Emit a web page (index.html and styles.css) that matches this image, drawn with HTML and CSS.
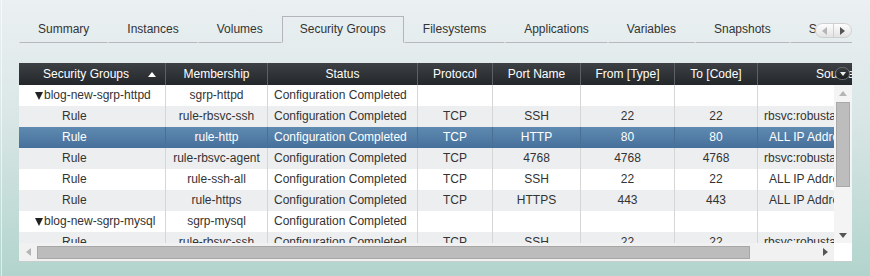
FILE: index.html
```html
<!DOCTYPE html>
<html lang="en">

<head>
    <meta charset="UTF-8" />
    <title>Security Groups</title>
    <link rel="stylesheet" href="styles.css">
</head>

<body>
    <div class="page">
        <div class="tabbar">
            <ul class="tabs">
                <li>Summary</li>
                <li>Instances</li>
                <li>Volumes</li>
                <li class="active">Security Groups</li>
                <li>Filesystems</li>
                <li>Applications</li>
                <li>Variables</li>
                <li>Snapshots</li>
                <li>Scripts</li>
            </ul>
            <div class="tab-scroll">
                <span class="ts-btn"><i class="arrow-left off"></i></span>
                <span class="ts-btn"><i class="arrow-right"></i></span>
            </div>
        </div>

        <div class="grid">
            <div class="grid-head">
                <div class="row head">
                    <div class="c c1 sortable">Security Groups <i class="sort-up"></i></div>
                    <div class="c c2">Membership</div>
                    <div class="c c3">Status</div>
                    <div class="c c4">Protocol</div>
                    <div class="c c5">Port Name</div>
                    <div class="c c6">From [Type]</div>
                    <div class="c c7">To [Code]</div>
                    <div class="c c8">Source</div>
                </div>
                <span class="col-menu"><i></i></span>
            </div>

            <div class="grid-main">
                <div class="grid-body">
                    <div class="row">
                        <div class="c c1 group"><i class="expander"></i>blog-new-sgrp-httpd</div>
                        <div class="c c2">sgrp-httpd</div>
                        <div class="c c3 left">Configuration Completed</div>
                        <div class="c c4"></div>
                        <div class="c c5"></div>
                        <div class="c c6"></div>
                        <div class="c c7"></div>
                        <div class="c c8 src"></div>
                    </div>
                    <div class="row alt">
                        <div class="c c1 rule">Rule</div>
                        <div class="c c2">rule-rbsvc-ssh</div>
                        <div class="c c3 left">Configuration Completed</div>
                        <div class="c c4">TCP</div>
                        <div class="c c5">SSH</div>
                        <div class="c c6">22</div>
                        <div class="c c7">22</div>
                        <div class="c c8 src">rbsvc:robustagent-ssh</div>
                    </div>
                    <div class="row selected">
                        <div class="c c1 rule">Rule</div>
                        <div class="c c2">rule-http</div>
                        <div class="c c3 left">Configuration Completed</div>
                        <div class="c c4">TCP</div>
                        <div class="c c5">HTTP</div>
                        <div class="c c6">80</div>
                        <div class="c c7">80</div>
                        <div class="c c8 src ip">ALL IP Addresses</div>
                    </div>
                    <div class="row alt">
                        <div class="c c1 rule">Rule</div>
                        <div class="c c2">rule-rbsvc-agent</div>
                        <div class="c c3 left">Configuration Completed</div>
                        <div class="c c4">TCP</div>
                        <div class="c c5">4768</div>
                        <div class="c c6">4768</div>
                        <div class="c c7">4768</div>
                        <div class="c c8 src">rbsvc:robustagent-agent</div>
                    </div>
                    <div class="row">
                        <div class="c c1 rule">Rule</div>
                        <div class="c c2">rule-ssh-all</div>
                        <div class="c c3 left">Configuration Completed</div>
                        <div class="c c4">TCP</div>
                        <div class="c c5">SSH</div>
                        <div class="c c6">22</div>
                        <div class="c c7">22</div>
                        <div class="c c8 src ip">ALL IP Addresses</div>
                    </div>
                    <div class="row alt">
                        <div class="c c1 rule">Rule</div>
                        <div class="c c2">rule-https</div>
                        <div class="c c3 left">Configuration Completed</div>
                        <div class="c c4">TCP</div>
                        <div class="c c5">HTTPS</div>
                        <div class="c c6">443</div>
                        <div class="c c7">443</div>
                        <div class="c c8 src ip">ALL IP Addresses</div>
                    </div>
                    <div class="row">
                        <div class="c c1 group"><i class="expander"></i>blog-new-sgrp-mysql</div>
                        <div class="c c2">sgrp-mysql</div>
                        <div class="c c3 left">Configuration Completed</div>
                        <div class="c c4"></div>
                        <div class="c c5"></div>
                        <div class="c c6"></div>
                        <div class="c c7"></div>
                        <div class="c c8 src"></div>
                    </div>
                    <div class="row alt">
                        <div class="c c1 rule">Rule</div>
                        <div class="c c2">rule-rbsvc-ssh</div>
                        <div class="c c3 left">Configuration Completed</div>
                        <div class="c c4">TCP</div>
                        <div class="c c5">SSH</div>
                        <div class="c c6">22</div>
                        <div class="c c7">22</div>
                        <div class="c c8 src">rbsvc:robustagent-ssh</div>
                    </div>
                </div>
                <div class="vscroll">
                    <span class="sb-btn"><i class="arrow-up off"></i></span>
                    <span class="v-thumb"></span>
                    <span class="sb-fill"></span>
                    <span class="sb-btn"><i class="arrow-down"></i></span>
                </div>
            </div>

            <div class="hscroll">
                <div class="h-track">
                    <span class="sb-btn"><i class="arrow-left off"></i></span>
                    <span class="h-thumb"></span>
                    <span class="sb-fill"></span>
                    <span class="sb-btn"><i class="arrow-right"></i></span>
                </div>
                <div class="corner"></div>
            </div>
        </div>
    </div>
</body>

</html>
```

FILE: styles.css
```css
body {
    margin: 0;
    height: 276px;
    overflow: hidden;
    font-family: "Liberation Sans", Arial, sans-serif;
    font-size: 12px;
    color: #333;
    background: linear-gradient(#ebf0f2, #dbe7e7 40%, #b2d4cd);
}

.page {
    margin-left: 1px;
    border-left: 1px solid rgba(255, 255, 255, 0.6);
    padding: 16px 0 0 17px;
    height: 260px;
}

/* tabs */
.tabbar {
    position: relative;
    width: 833px;
    height: 27px;
    overflow: hidden;
}

.tabs {
    display: flex;
    margin: 0;
    padding: 0;
    list-style: none;
    white-space: nowrap;
}

.tabs li {
    flex: none;
    box-sizing: border-box;
    height: 27px;
    padding: 0 18px;
    line-height: 25px;
    border: 1px solid transparent;
    border-bottom-color: #b7b7bf;
    color: #333;
}

.tabs li.active {
    padding: 0 17px;
    border-color: #b4b4bc;
    border-bottom-color: transparent;
}

.tab-scroll {
    position: absolute;
    top: 7px;
    right: 0;
    display: flex;
    width: 37px;
    height: 15px;
    box-sizing: border-box;
    border: 1px solid #cfcfcf;
    border-radius: 8px;
    background: linear-gradient(#fdfdfd, #e3e3e3);
}

.ts-btn {
    flex: 1;
    display: flex;
    align-items: center;
    justify-content: center;
}

.ts-btn + .ts-btn {
    border-left: 1px solid #cfcfcf;
}

/* arrows */
.arrow-left,
.arrow-right,
.arrow-up,
.arrow-down {
    display: block;
    width: 0;
    height: 0;
}

.arrow-left {
    border-top: 4px solid transparent;
    border-bottom: 4px solid transparent;
    border-right: 5px solid #555;
}

.arrow-right {
    border-top: 4px solid transparent;
    border-bottom: 4px solid transparent;
    border-left: 5px solid #555;
}

.arrow-up {
    border-left: 4px solid transparent;
    border-right: 4px solid transparent;
    border-bottom: 5px solid #555;
}

.arrow-down {
    border-left: 4px solid transparent;
    border-right: 4px solid transparent;
    border-top: 5px solid #555;
}

.arrow-left.off {
    border-right-color: #b5b5b5;
}

.arrow-up.off {
    border-bottom-color: #b5b5b5;
}

/* grid */
.grid {
    margin-top: 20px;
    width: 833px;
    background: #fff;
    border-bottom: 1px solid #c8cccc;
}

.grid-head {
    position: relative;
    height: 22px;
    overflow: hidden;
    background: linear-gradient(#3d4044, #24272a);
}

.row {
    display: flex;
    height: 21px;
}

.row.alt {
    background: #edeef0;
}

.row.selected {
    background: linear-gradient(#5f8ab0, #46709b);
    color: #fff;
}

.c {
    flex: none;
    box-sizing: border-box;
    padding: 0 6px;
    border-right: 1px solid #d6d6d6;
    line-height: 21px;
    text-align: center;
    white-space: nowrap;
    overflow: hidden;
}

.row.selected .c {
    border-right-color: #4a6f94;
}

.row.head {
    height: 22px;
    color: #fff;
}

.row.head .c {
    line-height: 22px;
    border-right-color: #5d6064;
}

.c1 { width: 147px; }
.c2 { width: 102px; }
.c3 { width: 150px; }
.c4 { width: 75px; }
.c5 { width: 88px; }
.c6 { width: 94px; }
.c7 { width: 83px; }
.c8 { width: 155px; }

.left {
    text-align: left;
}

.src {
    text-align: left;
}

.src.ip {
    padding-left: 11px;
}

.row.head .c8 {
    text-align: center;
}

.sortable {
    position: relative;
    padding-right: 18px;
}

.sort-up {
    position: absolute;
    top: 9px;
    right: 9px;
    width: 0;
    height: 0;
    border-left: 4px solid transparent;
    border-right: 4px solid transparent;
    border-bottom: 5px solid #fff;
}

.col-menu {
    position: absolute;
    top: 4px;
    right: 2px;
    display: flex;
    align-items: center;
    justify-content: center;
    width: 15px;
    height: 13px;
    box-sizing: border-box;
    border: 1px solid #6a6d70;
    border-radius: 7px;
    background: linear-gradient(#3a3d40, #1c1e20);
}

.col-menu i {
    width: 0;
    height: 0;
    border-left: 3px solid transparent;
    border-right: 3px solid transparent;
    border-top: 4px solid #eee;
}

.group {
    text-align: left;
    padding-left: 16px;
}

.expander {
    display: inline-block;
    width: 0;
    height: 0;
    margin-right: 1px;
    vertical-align: -1px;
    border-left: 4px solid transparent;
    border-right: 4px solid transparent;
    border-top: 8px solid #222;
}

.rule {
    text-align: left;
    padding-left: 43px;
}

.grid-main {
    display: flex;
    height: 158px;
}

.grid-body {
    width: 815px;
    flex: none;
    overflow: hidden;
}

/* scrollbars */
.vscroll {
    display: flex;
    flex-direction: column;
    width: 18px;
    flex: none;
    background: #f4f4f4;
}

.sb-btn {
    flex: none;
    display: flex;
    align-items: center;
    justify-content: center;
    width: 18px;
    height: 16px;
}

.sb-fill {
    flex: 1;
}

.v-thumb {
    flex: none;
    margin: 1px 0 0 2px;
    width: 14px;
    height: 85px;
    box-sizing: border-box;
    border: 1px solid #a9a9a9;
    background: #bdbdbd;
}

.hscroll {
    display: flex;
    height: 18px;
}

.h-track {
    display: flex;
    align-items: center;
    width: 815px;
    flex: none;
    background: #f1f1f1;
}

.h-track .sb-btn {
    height: 18px;
}

.h-thumb {
    flex: none;
    width: 713px;
    height: 13px;
    box-sizing: border-box;
    border: 1px solid #a7a7a7;
    background: #bcbcbc;
}

.corner {
    flex: 1;
    background: #fff;
}
```
